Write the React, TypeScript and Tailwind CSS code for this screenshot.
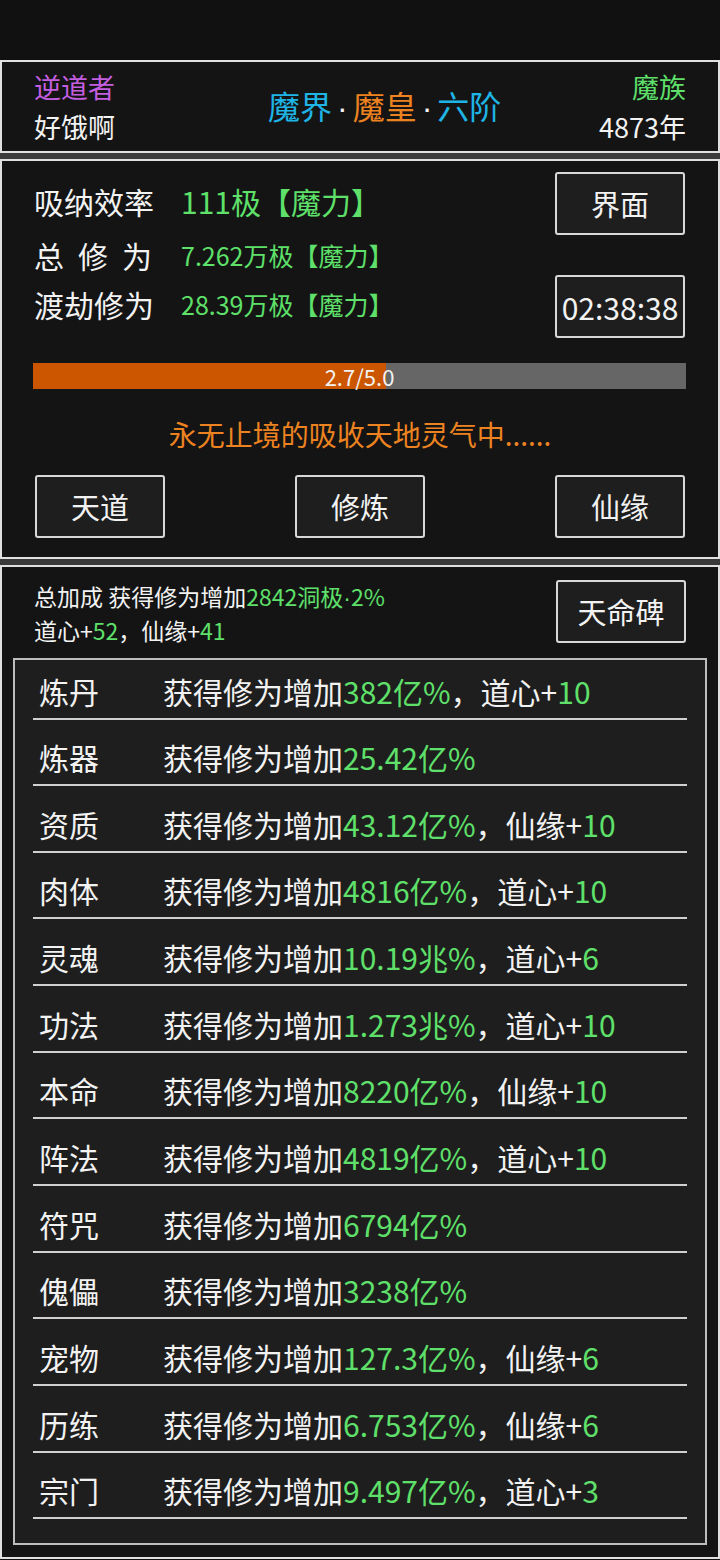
import React from 'react'

const font = { fontFamily: '"Noto Sans CJK SC", "Noto Sans", sans-serif' }
const dotFont = { fontFamily: '"Liberation Sans", sans-serif' }

interface Row {
  name: string
  value: string
  extra?: string
  extraValue?: string
}

const rows: Row[] = [
  { name: '炼丹', value: '382亿%', extra: '道心+', extraValue: '10' },
  { name: '炼器', value: '25.42亿%' },
  { name: '资质', value: '43.12亿%', extra: '仙缘+', extraValue: '10' },
  { name: '肉体', value: '4816亿%', extra: '道心+', extraValue: '10' },
  { name: '灵魂', value: '10.19兆%', extra: '道心+', extraValue: '6' },
  { name: '功法', value: '1.273兆%', extra: '道心+', extraValue: '10' },
  { name: '本命', value: '8220亿%', extra: '仙缘+', extraValue: '10' },
  { name: '阵法', value: '4819亿%', extra: '道心+', extraValue: '10' },
  { name: '符咒', value: '6794亿%' },
  { name: '傀儡', value: '3238亿%' },
  { name: '宠物', value: '127.3亿%', extra: '仙缘+', extraValue: '6' },
  { name: '历练', value: '6.753亿%', extra: '仙缘+', extraValue: '6' },
  { name: '宗门', value: '9.497亿%', extra: '道心+', extraValue: '3' },
]

function Btn({ children, className = '' }: { children: React.ReactNode; className?: string }) {
  return (
    <div
      className={`flex items-center justify-center w-[130px] h-[63px] bg-[#1e1e1e] border-2 border-[#d8d8d8] rounded-[3px] text-[#f2f2f2] text-[29px] leading-none ${className}`}
    >
      {children}
    </div>
  )
}

export default function App() {
  return (
    <div className="w-[720px] h-[1560px] bg-[#111111] flex flex-col" style={font}>
      <div className="h-[60px] shrink-0" />

      {/* Header */}
      <div className="h-[93px] shrink-0 border-2 border-[#e0e0e0] bg-[#141414] flex items-center px-[32px]">
        <div className="w-[234px] flex flex-col gap-[13px] leading-none">
          <span className="text-[27px] text-[#c45ee0]">逆道者</span>
          <span className="text-[27px] text-[#f2f2f2]">好饿啊</span>
        </div>
        <div className="text-[32px] leading-none">
          <span className="text-[#1fb4e6]">魔界</span>
          <span className="text-[#f2f2f2] mx-[5px]" style={dotFont}>·</span>
          <span className="text-[#ec8320]">魔皇</span>
          <span className="text-[#f2f2f2] mx-[5px]" style={dotFont}>·</span>
          <span className="text-[#1fb4e6]">六阶</span>
        </div>
        <div className="flex-1 flex flex-col items-end gap-[13px] leading-none">
          <span className="text-[27px] text-[#5ee06a]">魔族</span>
          <span className="text-[27px] text-[#f2f2f2]">4873年</span>
        </div>
      </div>

      <div className="h-[6px] shrink-0 bg-[#3a3a3a]" />

      {/* Cultivation panel */}
      <div className="h-[400px] shrink-0 border-2 border-[#e0e0e0] bg-[#141414] px-[32px] pt-[11px]">
        <div className="flex justify-between">
          <div className="flex flex-col pt-[13px]">
            <div className="flex items-center h-[32px]">
              <span className="w-[147px] text-[30px] text-[#f2f2f2] leading-none">吸纳效率</span>
              <span className="text-[30px] text-[#5ee06a] leading-none">111极【魔力】</span>
            </div>
            <div className="flex items-center h-[32px] mt-[22px]">
              <span className="w-[147px] pr-[29px] text-[30px] text-[#f2f2f2] leading-none flex justify-between">
                <span>总</span>
                <span>修</span>
                <span>为</span>
              </span>
              <span className="text-[25px] text-[#5ee06a] leading-none">7.262万极【魔力】</span>
            </div>
            <div className="flex items-center h-[32px] mt-[17px]">
              <span className="w-[147px] text-[30px] text-[#f2f2f2] leading-none">渡劫修为</span>
              <span className="text-[25px] text-[#5ee06a] leading-none">28.39万极【魔力】</span>
            </div>
          </div>
          <div className="flex flex-col gap-[40px] mr-[1px]">
            <Btn>界面</Btn>
            <Btn className="text-[30px]">02:38:38</Btn>
          </div>
        </div>

        <div className="relative mt-[25px] h-[26px] bg-[#666666] ml-[-1px]">
          <div className="h-full w-[54%] bg-[#cc5500]" />
          <div className="absolute inset-0 flex items-center justify-center text-[22px] text-[#f2f2f2] leading-none">
            2.7/5.0
          </div>
        </div>

        <div className="mt-[31px] text-center text-[28px] text-[#ec8320] leading-none">
          永无止境的吸收天地灵气中......
        </div>

        <div className="flex justify-between mt-[27px] mx-[1px]">
          <Btn>天道</Btn>
          <Btn>修炼</Btn>
          <Btn>仙缘</Btn>
        </div>
      </div>

      <div className="h-[6px] shrink-0 bg-[#3a3a3a]" />

      {/* Bonus panel */}
      <div className="h-[994px] shrink-0 border-2 border-[#e0e0e0] bg-[#141414] pt-[13px] px-[11px]">
        <div className="flex justify-between px-[21px]">
          <div className="flex flex-col gap-[9px] pt-[5px] text-[23px] leading-none text-[#f2f2f2]">
            <div>
              总加成 获得修为增加
              <span className="text-[#5ee06a]">
                2842洞极<span style={dotFont}>·</span>2%
              </span>
            </div>
            <div>
              道心+<span className="text-[#5ee06a]">52</span>，仙缘+<span className="text-[#5ee06a]">41</span>
            </div>
          </div>
          <Btn>天命碑</Btn>
        </div>

        <div className="mt-[15px] h-[887px] border-2 border-[#bdbdbd] bg-[#1e1e1e] px-[18px] pt-[7.5px] flex flex-col gap-[14.67px]">
          {rows.map(r => (
            <div
              key={r.name}
              className="h-[52px] shrink-0 border-b-2 border-[#d0d0d0] flex items-center pb-[4px] text-[30px] text-[#f2f2f2] leading-none"
            >
              <span className="w-[130px] pl-[6px]">{r.name}</span>
              <span>
                获得修为增加<span className="text-[#5ee06a]">{r.value}</span>
                {r.extra && (
                  <>
                    ，{r.extra}
                    <span className="text-[#5ee06a]">{r.extraValue}</span>
                  </>
                )}
              </span>
            </div>
          ))}
        </div>
      </div>
    </div>
  )
}
